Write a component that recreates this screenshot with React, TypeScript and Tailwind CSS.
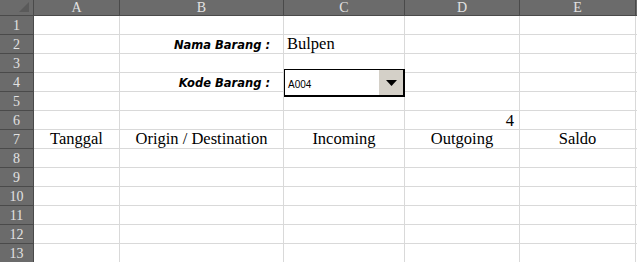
import React from 'react';

const cols = ['A', 'B', 'C', 'D', 'E'];
const rows = Array.from({ length: 13 }, (_, i) => i + 1);

function Dropdown() {
    return (
        <div className="absolute left-0 -top-[4px] z-10 w-[121px] h-[28px] bg-white border-t border-l border-r-2 border-b-2 border-black flex items-stretch">
            <span className="flex-1 flex items-center pl-[3px] pt-[3px] text-[10px] text-black font-['Liberation_Sans',Arial,sans-serif]">A004</span>
            <div className="w-[24px] bg-[#d4d0c8] flex items-center justify-center">
                <svg width="11" height="6" viewBox="0 0 11 6">
                    <polygon points="0,0 11,0 5.5,6" fill="#000"/>
                </svg>
            </div>
        </div>
    );
}

function content(r: number, c: string) {
    const label = "w-full text-right pr-[13px] pb-[2px] leading-none text-[11.5px] font-bold italic text-black font-['DejaVu_Sans',Verdana,sans-serif]";
    const body = "leading-none text-[16.5px] text-black font-['Liberation_Serif',serif]";
    if (r === 2 && c === 'B') return <span className={label}>Nama Barang :</span>;
    if (r === 4 && c === 'B') return <span className={label}>Kode Barang :</span>;
    if (r === 2 && c === 'C') return <span className={`${body} pl-[3px] pb-[1px]`}>Bulpen</span>;
    if (r === 4 && c === 'C') return <Dropdown/>;
    if (r === 6 && c === 'D') return <span className={`${body} w-full text-right pr-[5px]`}>4</span>;
    if (r === 7) {
        const t: Record<string, string> = {
            A: 'Tanggal',
            B: 'Origin / Destination',
            C: 'Incoming',
            D: 'Outgoing',
            E: 'Saldo',
        };
        return <span className={`${body} w-full text-center pb-[1px]`}>{t[c]}</span>;
    }
    return null;
}

export default function App() {
    return (
        <div className="w-[637px] h-[262px] overflow-hidden bg-white">
            <div className="grid grid-cols-[34px_86px_164px_121px_115px_116px_1fr] grid-rows-[16px_repeat(13,19px)]">
                {/* corner */}
                <div className="bg-[#6b6b6b] border-r border-b border-[#4a4a4a] flex items-end justify-end pr-[4px] pb-[3px]">
                    <svg width="10" height="10" viewBox="0 0 10 10">
                        <polygon points="10,0 10,10 0,10" fill="#5a5a5a"/>
                    </svg>
                </div>
                {cols.map(c => (
                    <div key={c} className="bg-[#6b6b6b] border-r border-b border-[#4a4a4a] flex items-center justify-center leading-[15px] text-[14px] text-[#e2e2e2] font-['Liberation_Serif',serif]">
                        {c}
                    </div>
                ))}
                <div className="bg-[#6b6b6b] border-b border-[#4a4a4a]"/>

                {rows.map(r => (
                    <React.Fragment key={r}>
                        <div className="bg-[#6b6b6b] border-r border-b border-[#4a4a4a] flex items-end justify-center pb-[1px] leading-none text-[14px] text-[#e2e2e2] font-['Liberation_Serif',serif]">
                            {r}
                        </div>
                        {cols.map(c => (
                            <div key={c} className={`border-r border-b border-[#d9d9d9] flex items-end min-w-0 ${r === 4 && c === 'C' ? 'relative' : ''}`}>
                                {content(r, c)}
                            </div>
                        ))}
                        <div className="border-b border-[#d9d9d9]"/>
                    </React.Fragment>
                ))}
            </div>
        </div>
    );
}
